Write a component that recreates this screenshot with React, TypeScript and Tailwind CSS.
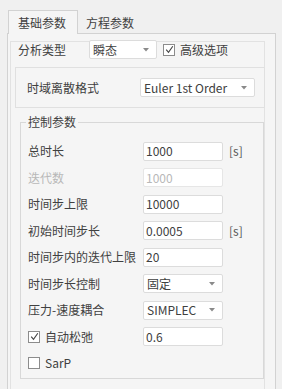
import { ReactNode } from 'react'

function Arrow() {
  return (
    <svg width="6" height="4" viewBox="0 0 6 4" className="shrink-0">
      <path d="M0 0 L6 0 L3 3.5 Z" fill="#8a8a8a" />
    </svg>
  )
}

function Select({ value, className }: { value: string; className: string }) {
  return (
    <div className={`h-[19px] bg-white border border-[#dcdcdc] rounded-[2px] flex items-center justify-between pl-[3px] pr-[7px] ${className}`}>
      <span>{value}</span>
      <Arrow />
    </div>
  )
}

function Input({ value, disabled }: { value: string; disabled?: boolean }) {
  return (
    <div
      className={`w-[80px] h-[19px] bg-white border border-[#dcdcdc] rounded-[2px] flex items-center pl-[2px] ${
        disabled ? 'text-[#b8b8b8] border-[#e6e6e6]' : ''
      }`}
    >
      {value}
    </div>
  )
}

function Check({ checked }: { checked?: boolean }) {
  return (
    <div className="w-[12px] h-[12px] border border-[#8c8c8c] bg-white flex items-center justify-center shrink-0">
      {checked && (
        <svg width="9" height="9" viewBox="0 0 9 9">
          <path d="M1.2 4.6 L3.5 7.4 L7.8 1.2" fill="none" stroke="#444" strokeWidth="1.1" />
        </svg>
      )}
    </div>
  )
}

function Row({ label, children, muted }: { label: ReactNode; children?: ReactNode; muted?: boolean }) {
  return (
    <div className="h-[26.5px] flex items-center">
      <div className={`w-[115px] shrink-0 ${muted ? 'text-[#b8b8b8]' : ''}`}>{label}</div>
      {children}
    </div>
  )
}

const unit = <span className="ml-[6px] text-[#555]">[s]</span>

export default function App() {
  return (
    <div className="w-[282px] h-[389px] overflow-hidden bg-[#f0f0f0] text-[12px] leading-none text-[#404040] font-['Noto_Sans_CJK_SC','Noto_Sans',sans-serif]">
      {/* tabs */}
      <div className="flex items-end pl-[8px] pt-[9px] h-[33px]">
        <div className="w-[70px] h-[24px] border border-b-0 border-[#d2d2d2] bg-[#f5f5f5] flex items-center pl-[9px] pt-px -mb-px relative z-10">
          基础参数
        </div>
        <div className="h-[22px] flex items-center pl-[8px] pt-px">方程参数</div>
      </div>

      {/* pane */}
      <div className="ml-[7px] w-[269px] h-[360px] border border-[#d2d2d2] bg-[#f5f5f5] pt-[7px] pl-[2px]">
        <div className="w-[255px] h-[350px] border-t border-l border-r border-[#e2e2e2] relative">
          <div className="absolute -top-[2px] left-[7px] right-0 h-[19px] flex items-center">
            <div className="w-[71px] shrink-0">分析类型</div>
            <Select value="瞬态" className="w-[68px]" />
            <div className="flex items-center ml-[6px] gap-[5px]">
              <Check checked />
              <span>高级选项</span>
            </div>
          </div>

          {/* 时域离散格式 */}
          <div className="absolute top-[25px] left-[4px] w-[250px] h-[41px] border border-[#e0e0e0] flex items-center pl-[11px]">
            <div className="w-[113px] shrink-0">时域离散格式</div>
            <Select value="Euler 1st Order" className="w-[115px]" />
          </div>

          {/* 控制参数 */}
          <div className="absolute top-[80px] left-[9px] w-[244px] h-[257px] border border-[#d8d8d8] pl-[7px] pt-[15px]">
            <div className="absolute -top-[7px] left-[5px] px-[2px] bg-[#f5f5f5]">控制参数</div>
            <Row label="总时长">
              <Input value="1000" />
              {unit}
            </Row>
            <Row label="迭代数" muted>
              <Input value="1000" disabled />
            </Row>
            <Row label="时间步上限">
              <Input value="10000" />
            </Row>
            <Row label="初始时间步长">
              <Input value="0.0005" />
              {unit}
            </Row>
            <Row label="时间步内的迭代上限">
              <Input value="20" />
            </Row>
            <Row label="时间步长控制">
              <Select value="固定" className="w-[80px]" />
            </Row>
            <Row label="压力-速度耦合">
              <Select value="SIMPLEC" className="w-[80px]" />
            </Row>
            <Row
              label={
                <div className="flex items-center gap-[5px]">
                  <Check checked />
                  <span>自动松弛</span>
                </div>
              }
            >
              <Input value="0.6" />
            </Row>
            <Row
              label={
                <div className="flex items-center gap-[5px]">
                  <Check />
                  <span>SarP</span>
                </div>
              }
            />
          </div>
        </div>
      </div>
    </div>
  )
}
